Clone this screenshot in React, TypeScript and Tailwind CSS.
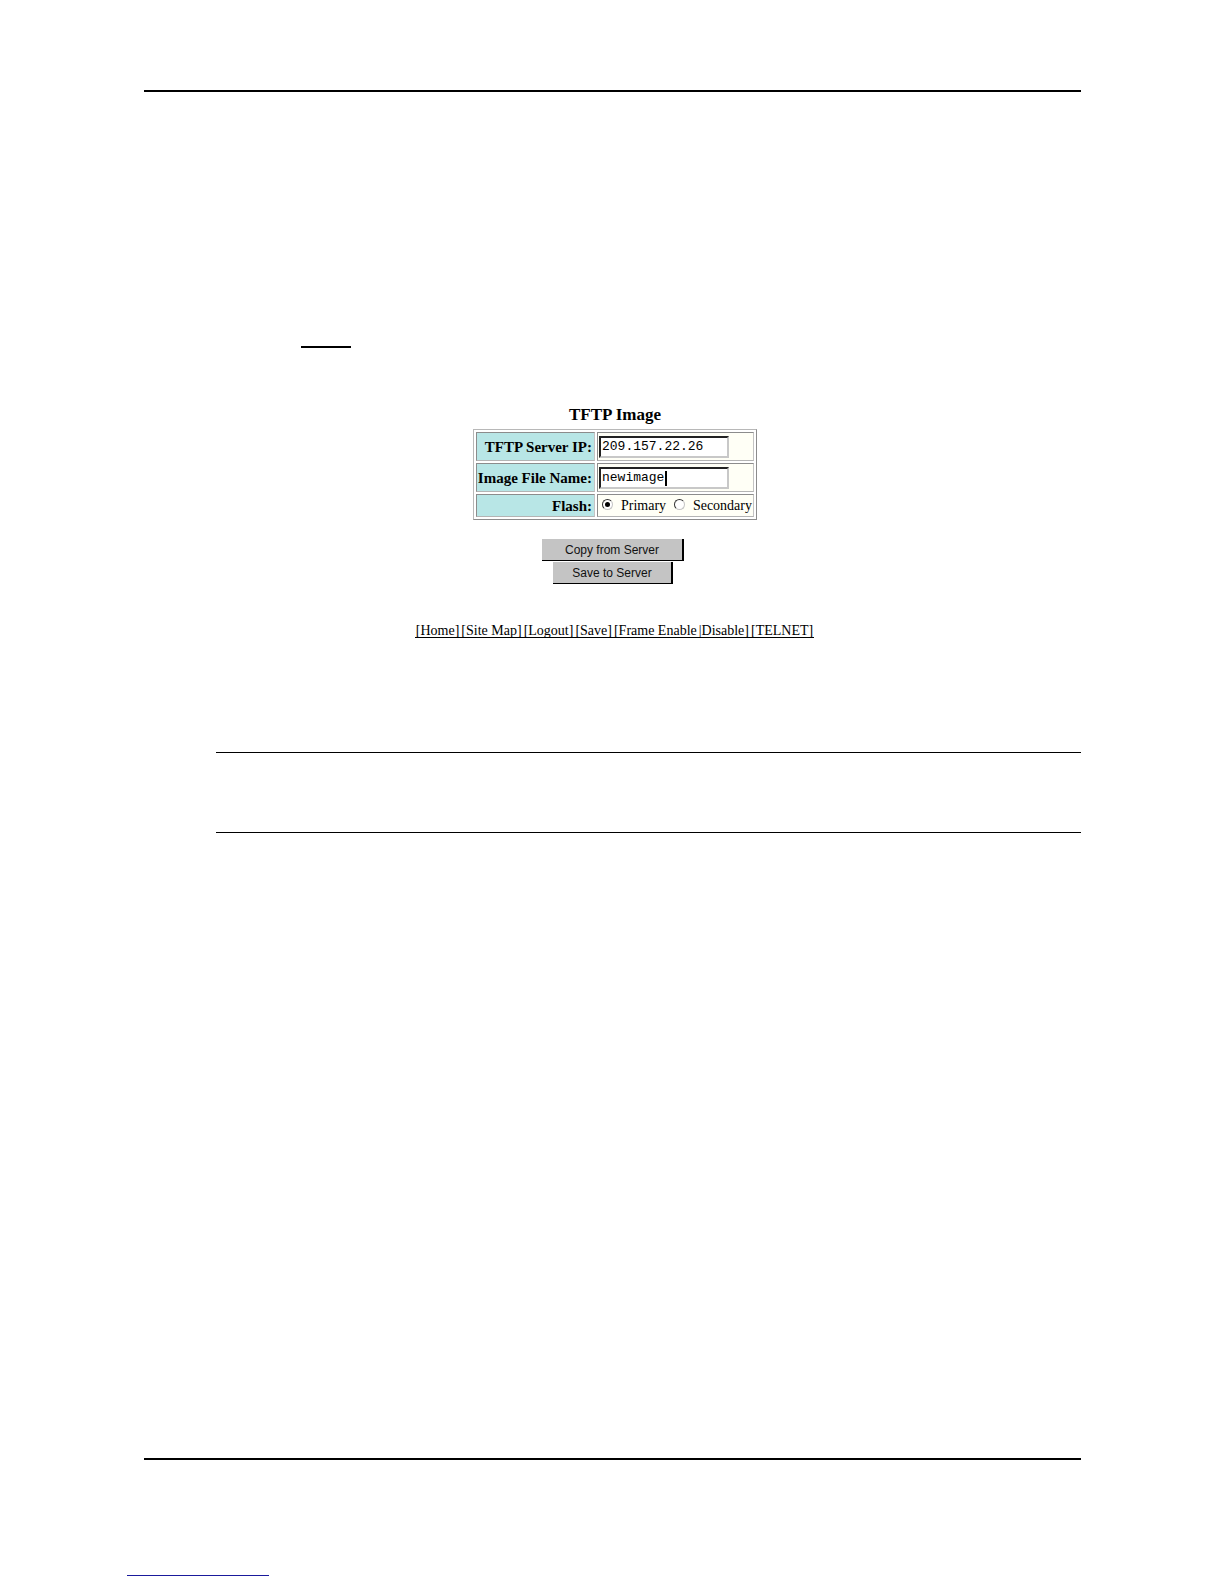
import type { ReactNode } from 'react';

const links = ['[Home]', '[Site Map]', '[Logout]', '[Save]', '[Frame Enable', '|Disable]', '[TELNET]'];

const cell = 'border border-t-[#8c8c8c] border-l-[#8c8c8c] border-r-[#c4c4c4] border-b-[#b4b4b4]';
const field =
  'block h-[22px] w-[130px] border-2 border-t-[#222222] border-l-[#222222] border-r-[#c8c8c8] border-b-[#c8c8c8] bg-white px-px font-["Liberation_Mono",monospace] text-[13px] text-black outline-none';
const button =
  'h-[22px] border-r-2 border-b border-black bg-[#c4c4c4] font-["Liberation_Sans",sans-serif] text-xs text-[#111111]';

function Row({ id, label, children, height }: { id: string; label: string; children: ReactNode; height: string }) {
  return (
    <tr className={height}>
      <th scope="row" className={`${cell} w-[119px] bg-[#b8e6e6] p-0 pr-0.5 text-right text-[15px] leading-4 font-bold whitespace-nowrap`}>
        <label htmlFor={id}>{label}</label>
      </th>
      <td className={`${cell} w-[157px] bg-[#fffff6] p-0 pl-px`}>{children}</td>
    </tr>
  );
}

function Radio({ id, label, checked }: { id: string; label: string; checked?: boolean }) {
  return (
    <span className="flex items-center gap-2">
      <input
        id={id}
        type="radio"
        name="flash"
        defaultChecked={checked}
        className="mb-0.5 grid size-[11px] appearance-none place-items-center rounded-full border border-t-[#333333] border-r-[#c4c4c4] border-b-[#c4c4c4] border-l-[#333333] bg-white before:size-[5px] before:rounded-full checked:before:bg-black"
      />
      <label htmlFor={id}>{label}</label>
    </span>
  );
}

export default function App() {
  return (
    <div className="flex min-h-screen flex-col bg-white pt-[90px] font-['Liberation_Serif',serif] text-black">
      <main className="mr-[143px] ml-36 flex flex-col border-y-2 border-black pb-[625px]">
        <hr className="mt-[254px] ml-[157px] w-[50px] border-t-2 border-black" />
        <form className="mt-[57px] flex flex-col items-center pl-[5px]" onSubmit={(e) => e.preventDefault()}>
          <h1 className="text-[17px] leading-5 font-bold">TFTP Image</h1>
          <table className="mt-1 border-separate border-spacing-[2px] border border-t-[#b8b8b8] border-r-[#8c8c8c] border-b-[#8c8c8c] border-l-[#b8b8b8]">
            <tbody>
              <Row id="server" label="TFTP Server IP:" height="h-[29px]">
                <input id="server" type="text" defaultValue="209.157.22.26" className={field} />
              </Row>
              <Row id="file" label="Image File Name:" height="h-[29px]">
                <div className="relative">
                  <input id="file" type="text" defaultValue="newimage" className={field} />
                  <span className="absolute top-1 left-[66px] h-[15px] w-0.5 bg-black" />
                </div>
              </Row>
              <Row id="primary" label="Flash:" height="h-[23px]">
                <div className="flex items-center justify-between pr-px pl-[3px] text-sm leading-4">
                  <Radio id="primary" label="Primary" checked />
                  <Radio id="secondary" label="Secondary" />
                </div>
              </Row>
            </tbody>
          </table>
          <div className="mt-[19px] flex flex-col items-center gap-px pr-1">
            <button type="submit" className={`${button} w-[142px]`}>
              Copy from Server
            </button>
            <button type="button" className={`${button} w-[120px]`}>
              Save to Server
            </button>
          </div>
        </form>
        <nav className="mt-[41px] flex justify-center pl-1 text-sm leading-3">
          {links.map((link) => (
            <a key={link} href="#" className="border-b border-black px-px">
              {link}
            </a>
          ))}
        </nav>
        <section className="mt-[114px] ml-[72px] h-[81px] border-y border-black" />
      </main>
      <hr className="mt-[115px] ml-[127px] h-px w-[142px] border-0 bg-[#1a1a9c]" />
    </div>
  );
}
